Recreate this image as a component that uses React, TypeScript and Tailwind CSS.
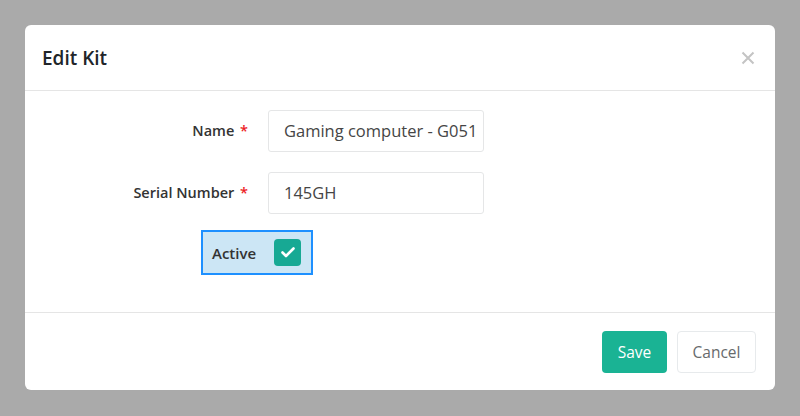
import React from "react";

export default function App() {
  const font = { fontFamily: '"Open Sans", "Noto Sans", sans-serif' };
  return (
    <div className="w-[800px] h-[416px] bg-[#aaaaaa] p-[25px]" style={font}>
      <div className="bg-white rounded-[6px] h-[365px] flex flex-col">
        <div className="h-[66px] border-b border-[#e5e5e5] flex items-center justify-between pl-[17px] pr-[20px]">
          <div className="text-[19px] font-semibold text-[#212529] mt-[1px]">Edit Kit</div>
          <svg width="14" height="14" viewBox="0 0 14 14" className="mt-[1px]">
            <path d="M1.5 1.5 L12.5 12.5 M12.5 1.5 L1.5 12.5" stroke="#c4c4c4" strokeWidth="2" />
          </svg>
        </div>
        <div className="flex-1 pt-[19px] flex flex-col">
          <div className="flex items-center">
            <div className="w-[225px] text-right text-[14.5px] font-semibold text-[#333] pr-[2px]">
              Name <span className="text-[#ed1c24] ml-[2px]">*</span>
            </div>
            <div className="ml-[18px] w-[216px] h-[42px] border border-[#e5e6e7] rounded-[3px] flex items-center pl-[15px] text-[16.5px] text-[#454545] whitespace-nowrap overflow-hidden">
              Gaming computer - G051
            </div>
          </div>
          <div className="flex items-center mt-[20px]">
            <div className="w-[225px] text-right text-[14.5px] font-semibold text-[#333] pr-[2px]">
              Serial Number <span className="text-[#ed1c24] ml-[2px]">*</span>
            </div>
            <div className="ml-[18px] w-[216px] h-[42px] border border-[#e5e6e7] rounded-[3px] flex items-center pl-[15px] text-[16.5px] text-[#454545] whitespace-nowrap overflow-hidden">
              145GH
            </div>
          </div>
          <div className="mt-[16px] ml-[176px] w-[112px] h-[45px] border-2 border-[#1e90ff] bg-[#cce6f5] flex items-center justify-between pl-[9px] pr-[10px]">
            <span className="text-[15px] font-semibold text-[#333] mt-[2px]">Active</span>
            <span className="w-[27px] h-[27px] rounded-[4px] bg-[#17a994] flex items-center justify-center">
              <svg width="14" height="11" viewBox="0 0 14 11">
                <path d="M1.5 5.5 L5 9 L12.5 1.5" stroke="white" strokeWidth="2.6" fill="none" strokeLinecap="round" strokeLinejoin="round" />
              </svg>
            </span>
          </div>
        </div>
        <div className="h-[78px] border-t border-[#e5e5e5] flex items-center justify-end pr-[19px] gap-[10px]">
          <button className="w-[65px] h-[42px] rounded-[4px] bg-[#1ab394] text-white text-[15.5px] pt-[3px]" style={font}>Save</button>
          <button className="w-[79px] h-[42px] rounded-[4px] border border-[#e7eaec] bg-white text-[#676a6c] text-[15.5px] pt-[3px]" style={font}>Cancel</button>
        </div>
      </div>
    </div>
  );
}
